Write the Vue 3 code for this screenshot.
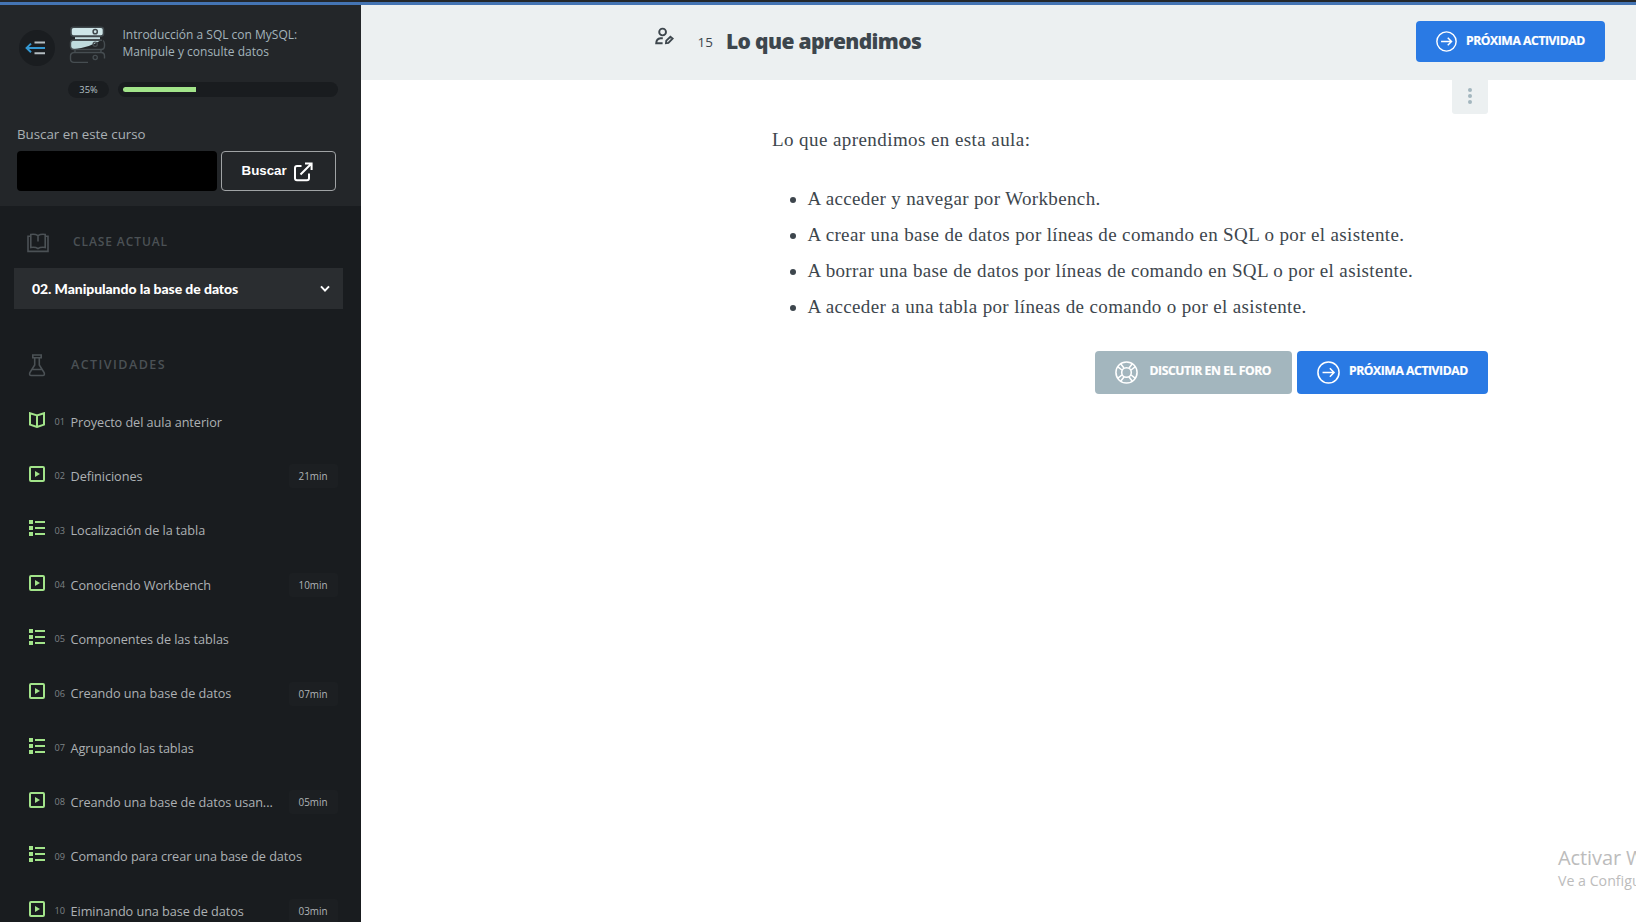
<script setup>
const activities = [
  { n: '01', type: 'book', title: 'Proyecto del aula anterior' },
  { n: '02', type: 'video', title: 'Definiciones', time: '21min' },
  { n: '03', type: 'list', title: 'Localización de la tabla' },
  { n: '04', type: 'video', title: 'Conociendo Workbench', time: '10min' },
  { n: '05', type: 'list', title: 'Componentes de las tablas' },
  { n: '06', type: 'video', title: 'Creando una base de datos', time: '07min' },
  { n: '07', type: 'list', title: 'Agrupando las tablas' },
  { n: '08', type: 'video', title: 'Creando una base de datos usan...', time: '05min' },
  { n: '09', type: 'list', title: 'Comando para crear una base de datos' },
  { n: '10', type: 'video', title: 'Eiminando una base de datos', time: '03min' },
]
const lessons = [
  'A acceder y navegar por Workbench.',
  'A crear una base de datos por líneas de comando en SQL o por el asistente.',
  'A borrar una base de datos por líneas de comando en SQL o por el asistente.',
  'A acceder a una tabla por líneas de comando o por el asistente.',
]
const progress = 35
</script>

<template>
  <div class="page">
    <div class="topbar"></div>
    <div class="shell">
      <aside class="sidebar">
        <header class="course">
          <div class="course-row">
            <button class="toggle" aria-label="menu">
              <svg width="36" height="36" viewBox="0 0 36 36" fill="none">
                <path d="M15.5 12.4H26M15.5 23.2H26" stroke="#b4bdc1" stroke-width="2" />
                <path d="M26 17.9H8M12 13.6L7.6 17.9L12 22.2" stroke="#3498d3" stroke-width="2" />
              </svg>
            </button>
            <svg class="server" width="38" height="38" viewBox="0 0 38 38" fill="none">
              <rect x="2" y="1.3" width="32.5" height="8.8" rx="2.5" fill="#cfe6e8" stroke="#3f474b" stroke-width="1.6" />
              <path d="M6 12.2H31" stroke="#c4dcdf" stroke-width="2" />
              <path d="M3 14.5H31.5C26 18 15 22.5 4 23.3Q2 23 2 21V16Q2 14.5 3 14.5Z" fill="#c0dcdf" />
              <path d="M34 14.5Q35.5 15.5 35.5 18V20Q35.5 23.5 32 23.5H5Q1.5 23.5 1.5 20V17Q1.5 14.2 4 14.2H33" stroke="#464d51" stroke-width="1.4" />
              <path d="M5 26.5H32Q35.5 26.5 35.5 30V32.5M5 26.5Q1.5 27 1.5 30V33Q1.5 36.4 5 36.4H19M6 24V26M32 24V26" stroke="#464d51" stroke-width="1.4" />
              <circle cx="26.2" cy="5.7" r="2.1" stroke="#3f474b" stroke-width="1.5" />
              <circle cx="26.2" cy="18.3" r="2.1" stroke="#464d51" stroke-width="1.3" />
              <circle cx="26.2" cy="31.5" r="2.1" stroke="#464d51" stroke-width="1.3" />
            </svg>
            <h2 class="course-title">Introducción a SQL con MySQL:<br>Manipule y consulte datos</h2>
          </div>
          <div class="progress-row">
            <span class="percent">{{ progress }}%</span>
            <div class="track"><div class="fill" :style="{ width: progress + '%' }"></div></div>
          </div>
          <label class="search-label">Buscar en este curso</label>
          <div class="search">
            <input class="search-input" type="text">
            <button class="search-btn">
              <span>Buscar</span>
              <svg width="20" height="20" viewBox="0 0 20 20" fill="none" stroke="#fff" stroke-width="2">
                <path d="M8.5 4H4Q2 4 2 6V16.2Q2 18.2 4 18.2H14Q16 18.2 16 16.2V11.5" />
                <path d="M7.5 12.5L18 2M12 1.4H18.6V8" />
              </svg>
            </button>
          </div>
        </header>

        <section class="current">
          <h3 class="section-title">
            <svg class="lib" width="22" height="20" viewBox="0 0 22 20" fill="none" stroke="#4b5155" stroke-width="1.6">
              <path d="M3.5 3.2H1V18.4H21V3.2H18.5" />
              <path d="M11 2.6Q8 .8 3.8 1.5V14.5Q8.5 13.8 11 15.6Q13.5 13.8 18.2 14.5V1.5Q14 .8 11 2.6V8.6" />
            </svg>
            <span>CLASE ACTUAL</span>
          </h3>
          <div class="select">
            <span>02. Manipulando la base de datos</span>
            <svg width="10" height="8" viewBox="0 0 10 8" fill="none" stroke="#fff" stroke-width="2"><path d="M1 1.4L5 5.6L9 1.4" /></svg>
          </div>
        </section>

        <section class="acts">
          <h3 class="section-title acts-title">
            <svg width="22" height="24" viewBox="0 0 22 24" fill="none" stroke="#4b5155" stroke-width="1.6">
              <path d="M6.8 2H15.2V4.8H6.8ZM8.7 5V12L3.9 19.5Q2.9 22.5 5.2 22.5H16.8Q19.1 22.5 18.1 19.5L13.3 12V5M5.8 16.5H16.2" />
            </svg>
            <span>ACTIVIDADES</span>
          </h3>
          <ul class="items">
            <li v-for="a in activities" :key="a.n" class="item">
              <svg v-if="a.type === 'book'" class="ico" width="16" height="16" viewBox="0 0 16 16" fill="none" stroke="#a2e48a" stroke-width="2">
                <path d="M8 3.4L1 1.2V12.6L8 15L15 12.6V1.2ZM8 3.4V15" />
              </svg>
              <svg v-else-if="a.type === 'video'" class="ico" width="16" height="16" viewBox="0 0 16 16">
                <rect x="1" y="1" width="14" height="14" rx="1" fill="none" stroke="#a2e48a" stroke-width="2" />
                <path d="M6 5L11 8L6 11Z" fill="#a2e48a" />
              </svg>
              <svg v-else class="ico" width="16" height="16" viewBox="0 0 16 16" fill="#a2e48a">
                <path d="M0 0H4V4H0ZM0 6H4V10H0ZM0 12H4V16H0ZM6 1H16V3H6ZM6 7H16V9H6ZM6 13H16V15H6Z" />
              </svg>
              <span class="num">{{ a.n }}</span>
              <span class="name">{{ a.title }}</span>
              <span v-if="a.time" class="time">{{ a.time }}</span>
            </li>
          </ul>
        </section>
      </aside>

      <main class="main">
        <header class="main-head">
          <svg class="user" width="20" height="20" viewBox="0 0 20 20" fill="none" stroke="#3d464d" stroke-width="1.9">
            <circle cx="8.6" cy="5" r="3.4" />
            <path d="M8.8 11.3H6.5Q2.4 11.8 2.2 16.2H8.6" />
            <path d="M12 16.2L12.3 13.6L16.4 9.8L18.6 11.6L14.4 15.9Z" />
          </svg>
          <span class="lesson-n">15</span>
          <h1 class="lesson-t">Lo que aprendimos</h1>
          <button class="btn blue head-btn">
            <svg width="21" height="21" viewBox="0 0 22 22" fill="none" stroke="#fff" stroke-width="1.5"><circle cx="11" cy="11" r="10.1" /><path d="M5.3 11H16M12.3 7L16.3 11L12.3 15" /></svg>
            <span>PRÓXIMA ACTIVIDAD</span>
          </button>
        </header>
        <div class="body">
          <div class="menu"><i></i><i></i><i></i></div>
          <p class="intro">Lo que aprendimos en esta aula:</p>
          <ul class="lessons"><li v-for="l in lessons" :key="l">{{ l }}</li></ul>
          <div class="actions">
            <button class="btn gray">
              <svg width="23" height="23" viewBox="0 0 22 22" fill="none" stroke="#fff" stroke-width="1.5">
                <circle cx="11" cy="11" r="10.1" /><circle cx="11" cy="11" r="4.6" />
                <path d="M6.6 8.6L2.8 5.6M8.6 6.6L5.6 2.8M13.4 6.6L16.4 2.8M15.4 8.6L19.2 5.6M15.4 13.4L19.2 16.4M13.4 15.4L16.4 19.2M8.6 15.4L5.6 19.2M6.6 13.4L2.8 16.4" />
              </svg>
              <span>DISCUTIR EN EL FORO</span>
            </button>
            <button class="btn blue">
              <svg width="23" height="23" viewBox="0 0 22 22" fill="none" stroke="#fff" stroke-width="1.5"><circle cx="11" cy="11" r="10.1" /><path d="M5.3 11H16M12.3 7L16.3 11L12.3 15" /></svg>
              <span>PRÓXIMA ACTIVIDAD</span>
            </button>
          </div>
        </div>
      </main>
    </div>
    <div class="watermark"><div class="w1">Activar W</div><div class="w2">Ve a Configu</div></div>
  </div>
</template>

<style>
body { margin: 0; overflow: hidden; }
</style>
<style scoped>
* { box-sizing: border-box; }
button, input { border: 0; margin: 0; padding: 0; font: inherit; }
ul { list-style: none; margin: 0; padding: 0; }
h1, h2, h3, p { margin: 0; font-weight: 400; }
svg { display: block; flex: none; }
.page { position: relative; width: 1636px; height: 922px; overflow: hidden; background: #fff; font-family: "Open Sans", "Noto Sans", sans-serif; display: flex; flex-direction: column; }
.topbar { height: 5px; flex: none; background: #4474b3; border-top: 2px solid #23272b; }
.shell { flex: 1; display: flex; min-height: 0; }
.sidebar { width: 361px; flex: none; background: #191c1f; overflow: hidden; }
.course { height: 201px; background: #232629; padding: 21px 23px 0 17px; }
.course-row { display: flex; height: 48px; }
.toggle { width: 36px; height: 36px; border-radius: 50%; background: #1a1d20; margin: 4px 14px 0 2px; flex: none; }
.course-title { margin: 0 0 0 15.5px; font-size: 12px; line-height: 17px; color: #a4b4bb; white-space: nowrap; }
.progress-row { display: flex; align-items: center; height: 17px; margin: 7px 0 0 51px; }
.percent { width: 41px; height: 17px; border-radius: 9px; background: #1a1d20; color: #b4c0c5; font-size: 9.3px; line-height: 17px; text-align: center; }
.track { margin-left: 9px; width: 220px; height: 15px; border-radius: 8px; background: #191c1f; padding: 5px 6px 5px 5px; }
.fill { height: 5px; border-radius: 3px 0 0 3px; background: #a2e48a; }
.search-label { display: block; margin-top: 26px; font-size: 13.3px; line-height: 20px; color: #a9b0b4; }
.search { display: flex; gap: 4px; margin-top: 7px; }
.search-input { width: 200px; height: 40px; border-radius: 4px; background: #000; }
.search-btn { width: 115px; height: 40px; border: 1px solid #a0a3a5; border-radius: 4px; background: transparent; color: #fff; font: bold 13.33px "Liberation Sans", Arial, sans-serif; display: flex; align-items: center; padding-left: 19.5px; gap: 6px; }
.search-btn span { margin-top: -2px; }
.search-btn svg { margin-top: 2px; }
.current { padding: 26px 18px 0 14px; }
.section-title { display: flex; align-items: center; height: 20px; padding-left: 13px; font-size: 12px; font-weight: 600; letter-spacing: .9px; color: #4b5155; gap: 24px; }
.section-title span { margin-top: -2px; }
.lib { margin-top: 2px; }
.select { margin-top: 16px; width: 329px; height: 41px; background: #2a2d30; display: flex; align-items: center; justify-content: space-between; padding: 0 13px 0 18px; color: #fff; font: 900 14px Lato, sans-serif; letter-spacing: -.07px; }
.acts-title { margin: 46px 0 0 13px; font-size: 12.5px; letter-spacing: 1.45px; gap: 23px; }
.items { margin-top: 19.5px; }
.item { display: flex; align-items: center; height: 54.33px; padding: 0 23px 0 29px; }
.ico { margin-top: -4px; }
.num { width: 16px; margin-left: 9.5px; font-size: 9.2px; color: #7d8285; }
.name { font-size: 12.7px; letter-spacing: -.06px; color: #adb1b4; white-space: nowrap; flex: 1; }
.time { width: 49px; height: 24px; margin-top: 1px; border-radius: 3px; background: #1c1f22; font-size: 9.9px; line-height: 24px; text-align: center; color: #b0b5b8; padding-right: 1px; }
.main { flex: 1; min-width: 0; }
.main-head { height: 75px; background: #ecf0f1; display: flex; align-items: center; padding: 0 31px 0 293px; }
.user { margin-top: -12px; }
.lesson-n { margin: -2px 0 0 23.5px; width: 28.5px; font-size: 13.4px; color: #3d464d; }
.lesson-t { margin-top: -4px; font-size: 21px; letter-spacing: -.65px; font-weight: 800; color: #3d464d; flex: 1; white-space: nowrap; }
.btn { display: flex; align-items: center; border-radius: 4px; color: #fff; font-weight: 700; font-size: 12.2px; letter-spacing: -.44px; -webkit-text-stroke: .2px #fff; white-space: nowrap; padding-left: 20px; height: 43px; }
.btn span { margin-top: -4px; }
.blue { background: #2a7ae4; width: 191px; gap: 9px; }
.gray { background: #a3b6be; width: 197px; gap: 11.5px; }
.head-btn { width: 189px; height: 41px; margin-top: -2px; }
.head-btn span { margin-top: -3px; }
.body { position: relative; padding: 42px 148px 0 411px; }
.menu { position: absolute; top: 0; right: 148px; width: 36px; height: 34px; background: #ecf0f1; border-radius: 0 0 3px 3px; display: flex; flex-direction: column; align-items: center; padding-top: 7.5px; gap: 2.4px; }
.menu i { width: 4px; height: 4px; border-radius: 50%; background: #a3b6be; }
.intro, .lessons { font: 19px/36px "Liberation Serif", "Times New Roman", serif; letter-spacing: .36px; color: #3d464d; white-space: nowrap; }
.intro { letter-spacing: .42px; }
.lessons { padding-left: 18px; margin-top: 23px; }
.lessons li { display: flex; align-items: center; }
.lessons li::before { content: ""; width: 6px; height: 6px; border-radius: 50%; background: #3d464d; margin: 2px 11.5px 0 0; }
.actions { display: flex; justify-content: flex-end; gap: 5px; margin-top: 26px; }
.watermark { position: absolute; left: 1558px; top: 844px; white-space: nowrap; color: #bcbcbc; }
.w1 { font-size: 20px; line-height: 27px; letter-spacing: -.1px; }
.w2 { font-size: 14.2px; line-height: 20px; }
</style>
